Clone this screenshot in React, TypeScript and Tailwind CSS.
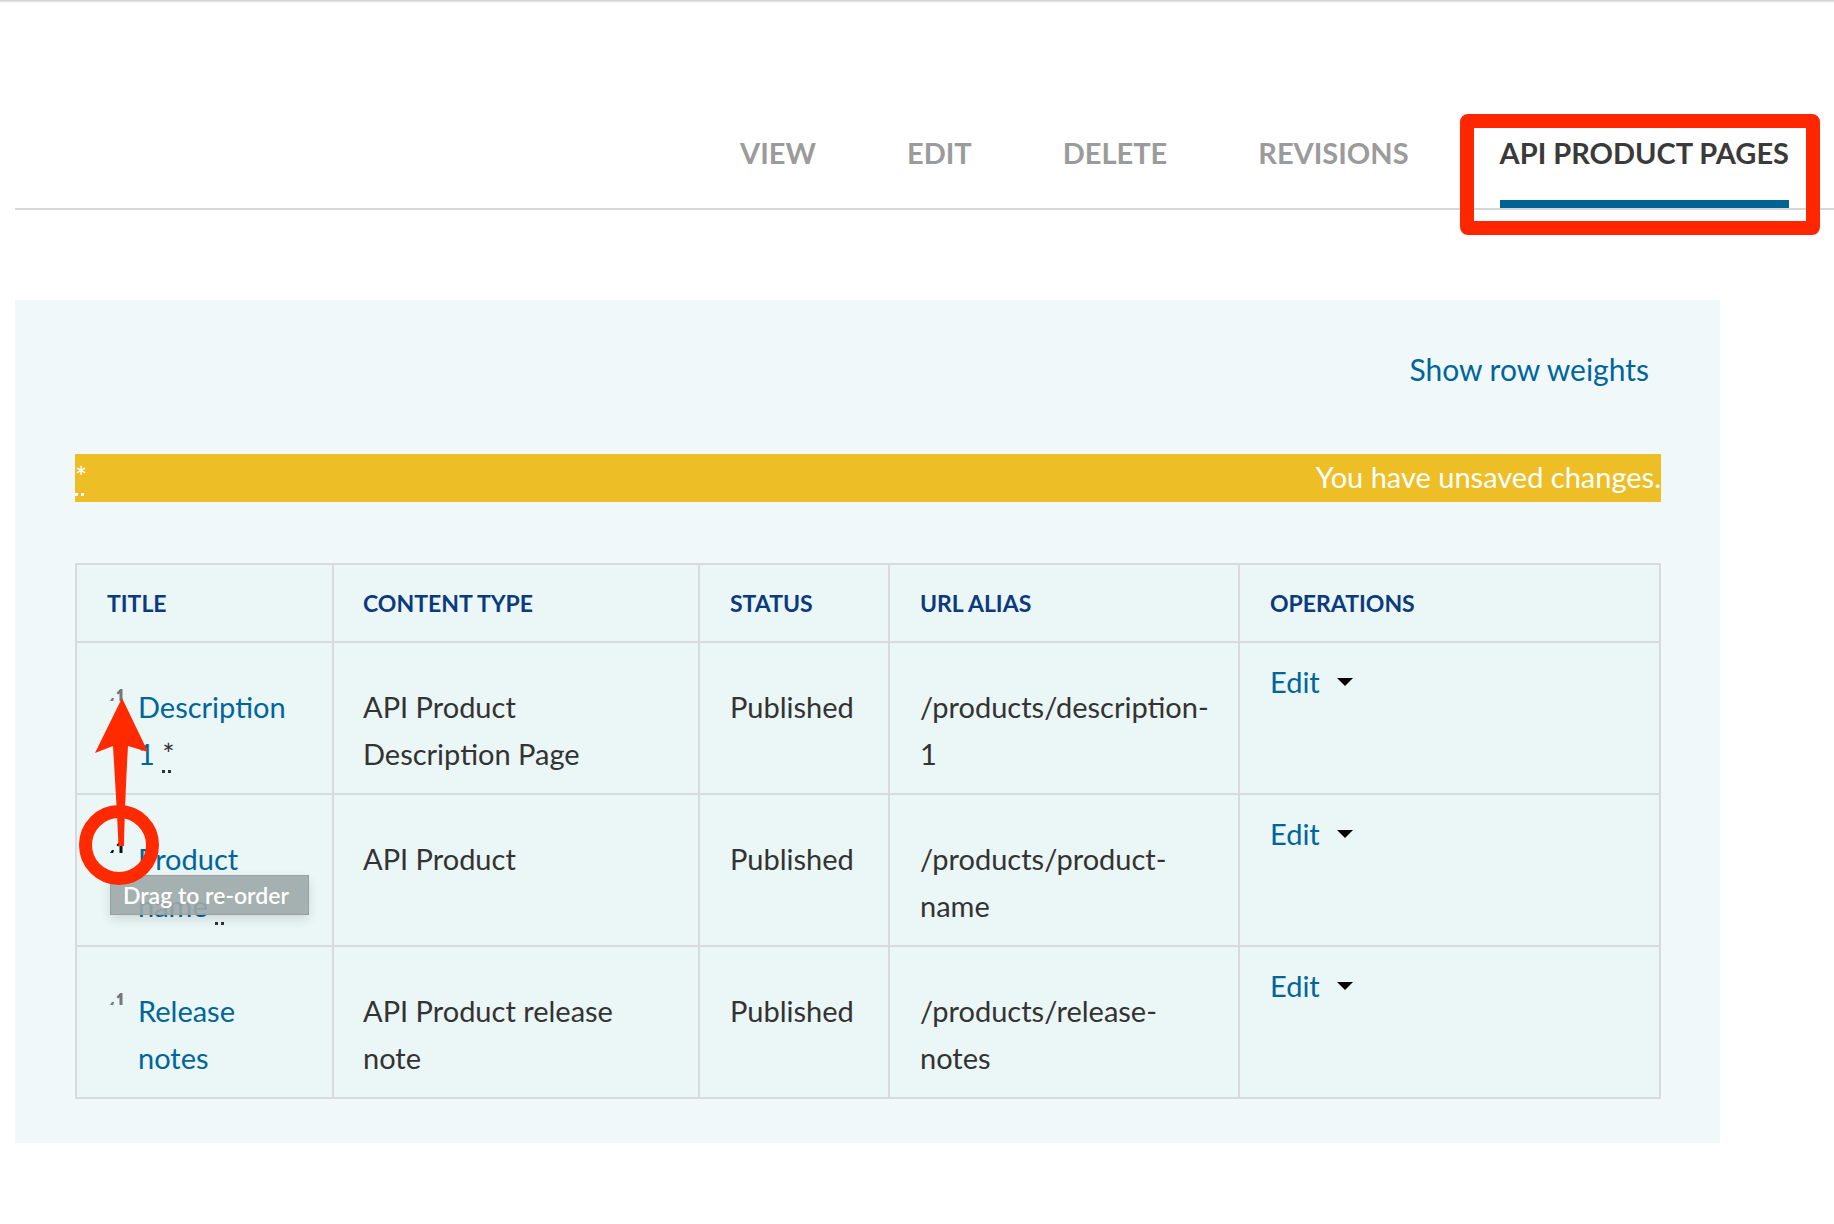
import React from "react";

const tabs = ["View", "Edit", "Delete", "Revisions", "API Product Pages"];

const rows = [
    {
        title: ["Description", "1"],
        changed: true,
        type: ["API Product", "Description Page"],
        url: ["/products/description-", "1"],
        hover: false,
    },
    {
        title: ["Product", "name"],
        changed: true,
        type: ["API Product"],
        url: ["/products/product-", "name"],
        hover: true,
    },
    {
        title: ["Release", "notes"],
        changed: false,
        type: ["API Product release", "note"],
        url: ["/products/release-", "notes"],
        hover: false,
    },
];

function Handle({ dark }: { dark: boolean }) {
    return (
        <svg width="13" height="12" viewBox="0 0 13 12" className="mt-[6px] shrink-0" fill={dark ? "#111" : "#777"}>
            <path d="M0 12 L2 9 L4 9 L3.2 12 Z" />
            <path d="M6.5 4 L10 0 L12.5 0 L12.5 12 L9.5 12 L9.5 4.5 L8 5.5 Z" />
        </svg>
    );
}

function Changed({ light }: { light?: boolean }) {
    return (
        <abbr
            title="Changed"
            className={
                "underline decoration-dotted decoration-[3px] underline-offset-[5px] " +
                (light ? "text-white" : "text-[#333]")
            }
        >
            *
        </abbr>
    );
}

function App() {
    return (
        <div className="relative min-h-screen w-full bg-white font-[Lato,sans-serif] text-[#333]">
            <div className="h-[3px] bg-linear-to-b from-[#cdcdcd] to-white" />

            {/* tabs */}
            <nav className="ml-[15px] flex justify-end gap-[91px] border-b-2 border-[#d6d6d6] pr-[45px] pt-[132px]">
                {tabs.map((t, i) => {
                    const active = i === tabs.length - 1;
                    return (
                        <div key={t} className="relative flex flex-col">
                            <span
                                className={
                                    "text-[29px] font-bold uppercase leading-[36px] " +
                                    (active ? "text-[#3a3a3a]" : "text-[#9b9b9b]")
                                }
                            >
                                {t}
                            </span>
                            <span className={"mt-[29px] h-[8px] " + (active ? "bg-[#006394]" : "bg-transparent")} />
                            {active && (
                                <span className="absolute -bottom-[27px] -left-[40px] -right-[31px] -top-[21px] rounded-[8px] border-[14px] border-[#ff2600]" />
                            )}
                        </div>
                    );
                })}
            </nav>

            {/* panel */}
            <section className="ml-[15px] mt-[90px] w-[1705px] bg-[#f0f8fa] pb-[44px] pl-[60px] pr-[59px] pt-[49px]">
                <div className="flex justify-end pr-[12px]">
                    <a className="text-[30px] leading-[40px] text-[#00659a]">Show row weights</a>
                </div>

                <div className="mt-[65px] flex h-[48px] items-start justify-between bg-[#eebe26] text-[29px] leading-[46px] text-white">
                    <Changed light />
                    <span>You have unsaved changes.</span>
                </div>

                <div className="mt-[61px] border-2 border-[#d7dbdb] bg-[#ebf6f6]">
                    <div className="grid h-[78px] grid-cols-[255px_366px_190px_350px_1fr] border-b-2 border-[#d7dbdb] text-[23px] font-bold uppercase text-[#0c3a7e]">
                        <div className="flex items-center pl-[30px]">Title</div>
                        <div className="flex items-center border-l-2 border-[#d7dbdb] pl-[29px]">Content type</div>
                        <div className="flex items-center border-l-2 border-[#d7dbdb] pl-[30px]">Status</div>
                        <div className="flex items-center border-l-2 border-[#d7dbdb] pl-[30px]">URL alias</div>
                        <div className="flex items-center border-l-2 border-[#d7dbdb] pl-[30px]">Operations</div>
                    </div>

                    {rows.map((r, i) => (
                        <div
                            key={r.title[0]}
                            className={
                                "grid grid-cols-[255px_366px_190px_350px_1fr] text-[29px] leading-[47px] " +
                                (i < rows.length - 1 ? "h-[152px] border-b-2 border-[#d7dbdb]" : "h-[150px]")
                            }
                        >
                            <div className="relative flex items-start pl-[33px] pt-[40px]">
                                <Handle dark={r.hover} />
                                <div className="ml-[15px]">
                                    <div className="text-[#00659a]">{r.title[0]}</div>
                                    <div>
                                        <span className="text-[#00659a]">{r.title[1]}</span>
                                        {r.changed && (
                                            <>
                                                {" "}
                                                <Changed />
                                            </>
                                        )}
                                    </div>
                                </div>
                                {r.hover && (
                                    <div className="absolute left-[33px] top-[80px] h-[40px] w-[199px] border border-[#95a0a0] bg-[#9da8a8]/90 pl-[12px] text-[23px] font-semibold leading-[38px] text-white shadow-[0_4px_10px_rgba(0,0,0,0.12)]">
                                        Drag to re-order
                                    </div>
                                )}
                            </div>
                            <div className="border-l-2 border-[#d7dbdb] pl-[29px] pt-[40px]">
                                {r.type.map((l) => (
                                    <div key={l}>{l}</div>
                                ))}
                            </div>
                            <div className="border-l-2 border-[#d7dbdb] pl-[30px] pt-[40px]">Published</div>
                            <div className="border-l-2 border-[#d7dbdb] pl-[30px] pt-[40px]">
                                {r.url.map((l) => (
                                    <div key={l}>{l}</div>
                                ))}
                            </div>
                            <div className="border-l-2 border-[#d7dbdb] pl-[30px] pt-[15px]">
                                <div className="flex h-[47px] items-center gap-[17px]">
                                    <a className="text-[#00659a]">Edit</a>
                                    <span className="h-0 w-0 border-x-[8.5px] border-t-[8px] border-x-transparent border-t-black" />
                                </div>
                            </div>
                        </div>
                    ))}
                </div>
            </section>

            {/* red annotation drawn over the table */}
            <svg className="pointer-events-none absolute left-0 top-0" width="200" height="900" viewBox="0 0 200 900">
                <circle cx="119" cy="845" r="33.5" fill="none" stroke="#ff2a00" strokeWidth="13" />
                <path
                    d="M122 698 L148 752 L128 746 C126 780 124.5 820 124 846 L118.5 846 C117.5 820 115 780 113 746 L95 753 Z"
                    fill="#ff2a00"
                />
            </svg>
        </div>
    );
}

export default App;
